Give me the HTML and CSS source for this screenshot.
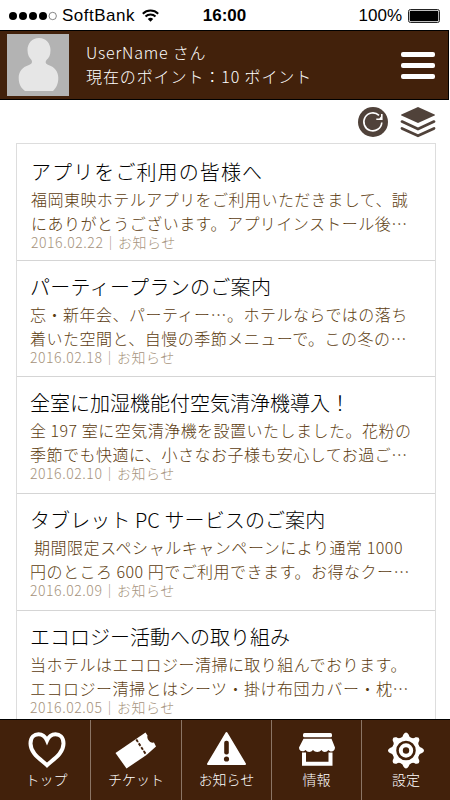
FILE: index.html
```html
<!DOCTYPE html>
<html lang="ja">
<head>
    <meta charset="UTF-8">
    <meta name="viewport" content="width=device-width, initial-scale=1.0">
    <title>お知らせ</title>
    <link rel="stylesheet" href="styles.css">
</head>
<body>
    <div class="status-bar">
        <div class="carrier">
            <svg width="48" height="10" viewBox="0 0 48 10">
                <circle cx="4" cy="5" r="4"/>
                <circle cx="14" cy="5" r="4"/>
                <circle cx="24" cy="5" r="4"/>
                <circle cx="34" cy="5" r="4"/>
                <circle cx="43.7" cy="5" r="3.7" fill="none" stroke="#555" stroke-width="0.7"/>
            </svg>
            <span class="carrier-name">SoftBank</span>
            <svg width="17" height="13" viewBox="0 0 17 13">
                <path d="M0.8 4.7a11 11 0 0 1 15.4 0M3.5 7.5a7.1 7.1 0 0 1 10 0" fill="none" stroke="#000" stroke-width="2"/>
                <path d="M8.5 12.8L5.8 10a3.9 3.9 0 0 1 5.4 0z"/>
            </svg>
        </div>
        <div class="clock">16:00</div>
        <div class="battery">
            <span>100%</span>
            <svg width="32" height="14" viewBox="0 0 32 14">
                <rect x="0.5" y="0.5" width="31" height="13" rx="2" fill="#fff" stroke="#222"/>
                <rect x="1.7" y="1.7" width="28.6" height="10.6" rx="1"/>
            </svg>
        </div>
    </div>

    <header class="header">
        <svg class="avatar" width="62" height="62" viewBox="0 0 62 62">
            <rect width="62" height="62" fill="#b3b3b3"/>
            <path d="M32 4C25 4 20.5 9.5 20.5 16C20.5 21 22.5 24 24.5 26C25.5 28 25 30 22 31C15 33 11.7 38 11.7 44C11.7 50 14 54 18 57H46C49 54 51.3 50 51.3 44C51.3 38 48 33 41.5 31C38.5 30 38 28 39.5 26C42 24 43.5 21 43.5 16C43.5 9.5 39 4 32 4Z" fill="#e6e6e6"/>
        </svg>
        <div class="user">
            <div class="user-name">UserName さん</div>
            <div class="user-point">現在のポイント：10 ポイント</div>
        </div>
        <div class="menu">
            <span></span>
            <span></span>
            <span></span>
        </div>
    </header>

    <main class="main">
        <div class="tools">
            <svg width="30" height="30" viewBox="0 0 30 30">
                <circle cx="15" cy="15" r="15" fill="#50423a"/>
                <path d="M21 8.3A9 9 0 1 0 23.8 15.5" fill="none" stroke="#fff" stroke-width="1.6"/>
                <path d="M24.600 7V13H18.300V11.600H21.300L23 9.500V7Z" fill="#fff"/>
            </svg>
            <svg width="36" height="31" viewBox="0 0 36 31">
                <path d="M18 0L34.6 7.4Q35.6 7.9 34.6 8.4L18 16L1.4 8.4Q0.4 7.9 1.4 7.4Z" fill="#50423a"/>
                <path d="M2 14.6L18 22L34 14.6M2 21.4L18 28.8L34 21.4" fill="none" stroke="#50423a" stroke-width="2.8" stroke-linecap="round"/>
            </svg>
        </div>

        <div class="news-list">
            <article class="news n1">
                <h2 class="title">アプリをご利用の皆様へ</h2>
                <p class="text">福岡東映ホテルアプリをご利用いただきまして、誠</p>
                <p class="text">にありがとうございます。アプリインストール後…</p>
                <div class="meta">2016.02.22｜お知らせ</div>
            </article>
            <article class="news n2">
                <h2 class="title">パーティープランのご案内</h2>
                <p class="text">忘・新年会、パーティー…。ホテルならではの落ち</p>
                <p class="text">着いた空間と、自慢の季節メニューで。この冬の…</p>
                <div class="meta">2016.02.18｜お知らせ</div>
            </article>
            <article class="news n3">
                <h2 class="title">全室に加湿機能付空気清浄機導入！</h2>
                <p class="text">全 197 室に空気清浄機を設置いたしました。花粉の</p>
                <p class="text">季節でも快適に、小さなお子様も安心してお過ご…</p>
                <div class="meta">2016.02.10｜お知らせ</div>
            </article>
            <article class="news n4">
                <h2 class="title">タブレット PC サービスのご案内</h2>
                <p class="text indent">期間限定スペシャルキャンペーンにより通常 1000</p>
                <p class="text">円のところ 600 円でご利用できます。お得なクー…</p>
                <div class="meta">2016.02.09｜お知らせ</div>
            </article>
            <article class="news n5">
                <h2 class="title">エコロジー活動への取り組み</h2>
                <p class="text">当ホテルはエコロジー清掃に取り組んでおります。</p>
                <p class="text">エコロジー清掃とはシーツ・掛け布団カバー・枕…</p>
                <div class="meta">2016.02.05｜お知らせ</div>
            </article>
        </div>
    </main>

    <nav class="tab-bar">
        <div class="tab tab-top">
            <svg width="40" height="40" viewBox="0 0 40 40">
                <path d="M20 35.2C15 30 3.5 24 3.5 13.5C3.5 7 7.5 4.2 11.5 4.2C15.5 4.2 18.5 7 20 10.5C21.5 7 24.5 4.2 28.5 4.2C32.5 4.2 36.5 7 36.5 13.5C36.5 24 25 30 20 35.2Z" fill="none" stroke="#fff" stroke-width="4"/>
            </svg>
            <span>トップ</span>
        </div>
        <div class="tab">
            <svg width="42" height="40" viewBox="0 0 42 40">
                <path d="M0.5 23L21 9L31.5 25L11.5 38.5Z" fill="#fff"/>
                <path d="M21 9L30.5 2.5L32.5 5.5C31.5 8.5 34.5 13.5 39 12.5L41 16.500L31.5 25Z" fill="#fff"/>
                <path d="M21.3 9.5L31.3 25" fill="none" stroke="#42210b" stroke-width="1.9" stroke-dasharray="3 1.6"/>
            </svg>
            <span>チケット</span>
        </div>
        <div class="tab">
            <svg width="42" height="40" viewBox="0 0 42 40">
                <path d="M20.5 3L39 34H2Z" fill="#fff" stroke="#fff" stroke-width="2" stroke-linejoin="round"/>
                <rect x="18.2" y="10.8" width="4.6" height="13.7" rx="2" fill="#42210b"/>
                <circle cx="20.5" cy="29" r="2.6" fill="#42210b"/>
            </svg>
            <span>お知らせ</span>
        </div>
        <div class="tab">
            <svg width="38" height="40" viewBox="0 0 38 40">
                <rect x="5" y="3" width="29" height="4.2" rx="1.5" fill="#fff"/>
                <path d="M5.5 8.7H33.5L37 17.5C37 22 32 22.500 30.500 20C28.500 22.500 25 22.500 23.500 20C21.500 22.500 17 22.500 15 20C13 22.500 9.500 22.500 7.500 20C5.500 22.500 1 21.500 1 17.500Z" fill="#fff"/>
                <path d="M6 22.500V33.800H32.500V22.500" fill="none" stroke="#fff" stroke-width="4"/>
            </svg>
            <span>情報</span>
        </div>
        <div class="tab">
            <svg width="40" height="40" viewBox="-20 -20.5 40 40">
                <g fill="#fff">
                    <circle r="13.5"/>
                    <path id="teeth" d="M-5.5 -12.5Q-3 -13.5 -2.6 -16Q0 -20 2.6 -16Q3 -13.5 5.5 -12.5V12.5Q3 13.5 2.6 16Q0 20 -2.6 16Q-3 13.5 -5.5 12.5Z"/>
                    <use href="#teeth" transform="rotate(45)"/>
                    <use href="#teeth" transform="rotate(90)"/>
                    <use href="#teeth" transform="rotate(135)"/>
                </g>
                <circle r="8.5" fill="none" stroke="#42210b" stroke-width="2.6"/>
                <circle r="3.2" fill="#42210b"/>
            </svg>
            <span>設定</span>
        </div>
    </nav>
</body>
</html>
```
FILE: styles.css
```css
* {
    box-sizing: border-box;
}
body {
    margin: 0;
    width: 450px;
    height: 800px;
    overflow: hidden;
    display: flex;
    flex-direction: column;
    background: #fff;
    font-family: "Noto Sans CJK JP Light", "Noto Sans CJK JP", sans-serif;
    font-weight: 300;
}
svg {
    display: block;
    flex-shrink: 0;
}
.status-bar {
    height: 30px;
    flex-shrink: 0;
    display: grid;
    grid-template-columns: 1fr auto 1fr;
    align-items: center;
    padding: 1px 10px 0 9px;
    font-family: "Liberation Sans", Arial, sans-serif;
    font-size: 17px;
    color: #000;
}
.carrier {
    display: flex;
    align-items: center;
}
.carrier-name {
    margin: 0 7px 0 5px;
    letter-spacing: 0.5px;
}
.clock {
    font-weight: bold;
}
.battery {
    display: flex;
    justify-content: flex-end;
    align-items: center;
    gap: 6px;
}
.header {
    width: 449px;
    height: 70px;
    flex-shrink: 0;
    display: flex;
    align-items: center;
    padding: 0 13px 0 7px;
    background: #42210b;
    border: 1px solid #000;
    border-left: none;
}
.user {
    flex: 1;
    margin-left: 17px;
    padding-bottom: 2px;
    color: #fff;
    font-size: 16px;
    line-height: 24px;
}
.user-name {
    letter-spacing: 0.8px;
}
.user-point {
    letter-spacing: 0.9px;
}
.menu {
    width: 34px;
    display: flex;
    flex-direction: column;
    gap: 6px;
}
.menu span {
    height: 5px;
    border-radius: 2px;
    background: #fff;
}
.main {
    height: 619px;
    flex-shrink: 0;
    overflow: hidden;
}
.tools {
    display: flex;
    justify-content: flex-end;
    gap: 12px;
    padding: 7px 14px 0 0;
    height: 43px;
}
.news-list {
    margin: 0 14px 0 16px;
    border: 1px solid #ddd;
}
.news {
    height: 116.7px;
    padding: 11px 0 0 13px;
    border-bottom: 1px solid #d5d5d5;
    white-space: nowrap;
}
.title {
    margin: 0;
    font-size: 20px;
    font-weight: 300;
    line-height: 30px;
    color: #000;
}
.text {
    margin: 0;
    font-size: 16px;
    line-height: 24px;
    letter-spacing: 0.49px;
    color: #5c3c10;
}
.meta {
    font-size: 14px;
    line-height: 15px;
    letter-spacing: 0.55px;
    color: #a6937c;
}
.indent {
    padding-left: 4px;
    letter-spacing: 0.54px;
}
.n1 {
    padding: 13px 0 0 14px;
}
.n1 .title {
    letter-spacing: 1.1px;
}
.n1 .text {
    letter-spacing: 0.46px;
}
.n2 .title {
    letter-spacing: 0.3px;
}
.n4 .title {
    letter-spacing: 0.1px;
}
.tab-bar {
    height: 81px;
    flex-shrink: 0;
    display: grid;
    grid-template-columns: 91px 91px 90px 90px 88px;
    background: #42210b;
    border-top: 1px solid #000;
}
.tab {
    display: flex;
    flex-direction: column;
    align-items: center;
    padding-top: 10px;
    border-right: 1px solid #8b7565;
    color: #fff;
    font-size: 14px;
    line-height: 19px;
}
.tab-top {
    padding-left: 3px;
}
.tab:last-child {
    border-right: none;
}
```
